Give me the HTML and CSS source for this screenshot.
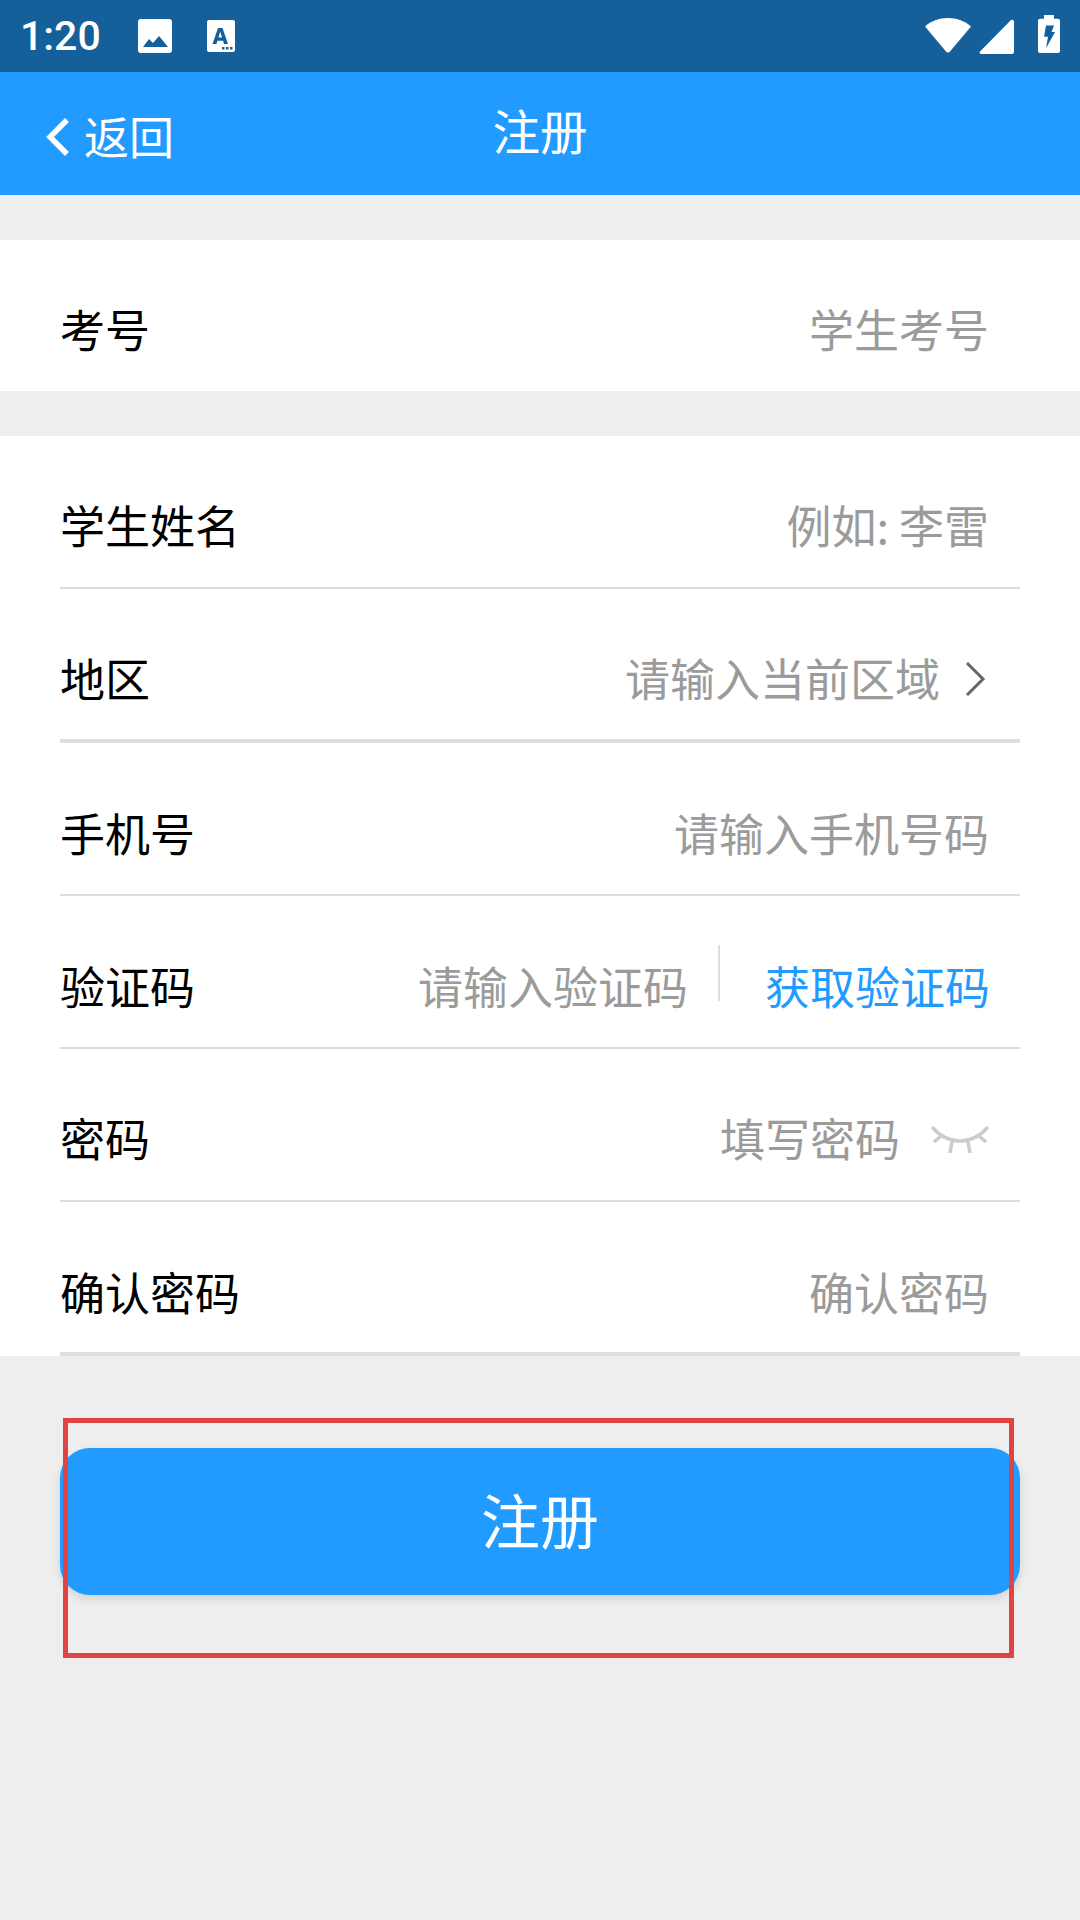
FILE: index.html

```html
<!DOCTYPE html>
<html lang="zh-CN">
<head>
  <meta charset="UTF-8" />
  <meta name="viewport" content="width=device-width, initial-scale=1.0"/>
  <title>注册</title>
  <link rel="stylesheet" href="styles.css">
</head>
<body>

<div class="status-bar">
  <span class="time">1:20</span>
  <svg class="st-image" width="34" height="34" viewBox="0 0 34 34">
    <rect width="34" height="34" rx="3" fill="#fff"/>
    <path d="M5 28l6-8 4 4 6-7 9 11z" fill="#155f9b"/>
  </svg>
  <svg class="st-font" width="28" height="32" viewBox="0 0 28 32">
    <rect width="28" height="32" rx="2" fill="#fff"/>
    <path d="M5.500 24L11 8h4.500L21 24h-4l-.9-3.200h-5.700L9.500 24zM11.500 17.500h3.500L13.200 11.500z" fill="#155f9b" fill-rule="evenodd"/>
    <path d="M15 27h2.500v2.500H15zM19 27h2.500v2.500H19zM23 27h2.500v2.500H23z" fill="#155f9b"/>
  </svg>
  <span class="spacer"></span>
  <svg class="st-wifi" width="46" height="36" viewBox="0 0 46 36">
    <path d="M0 9.500C6 4 14 1 23 1s17 3 23 8.500L25 34.500a2.600 2.600 0 0 1-4 0z" fill="#fff"/>
  </svg>
  <svg class="st-signal" width="35" height="35" viewBox="0 0 35 35">
    <path d="M32 1a2 2 0 0 1 3 1.500V33a2 2 0 0 1-2 2H2a1.500 1.500 0 0 1-1-2.500z" fill="#fff"/>
  </svg>
  <svg class="st-battery" width="22" height="38" viewBox="0 0 22 40" preserveAspectRatio="none">
    <path d="M6 0h10v4h4a2 2 0 0 1 2 2v32a2 2 0 0 1-2 2H2a2 2 0 0 1-2-2V6a2 2 0 0 1 2-2h4z" fill="#fff"/>
    <path d="M8 11h8l-2.500 7H17L8 35l2-12H6z" fill="#155f9b"/>
  </svg>
</div>

<div class="app-bar">
  <div class="back">
    <svg class="back-arrow" width="24" height="40" viewBox="0 0 24 40">
      <path d="M22 3L5 20l17 17" fill="none" stroke="#fff" stroke-width="5.500"/>
    </svg>
    <span>返回</span>
  </div>
  <div class="title">注册</div>
</div>

<div class="group group-first">
  <div class="row">
    <span class="label">考号</span>
    <span class="hint">学生考号</span>
  </div>
</div>

<div class="group">
  <div class="row line">
    <span class="label">学生姓名</span>
    <span class="hint">例如: 李雷</span>
  </div>
  <div class="row line-thick">
    <span class="label">地区</span>
    <span class="hint">请输入当前区域</span>
    <svg class="chevron" width="22" height="36" viewBox="0 0 22 36">
      <path d="M3 2l16 16L3 34" fill="none" stroke="#666" stroke-width="3"/>
    </svg>
  </div>
  <div class="row line low">
    <span class="label">手机号</span>
    <span class="hint">请输入手机号码</span>
  </div>
  <div class="row line low">
    <span class="label">验证码</span>
    <span class="hint">请输入验证码</span>
    <span class="code-split"></span>
    <span class="get-code">获取验证码</span>
  </div>
  <div class="row line">
    <span class="label">密码</span>
    <span class="hint">填写密码</span>
    <svg class="eye" width="60" height="30" viewBox="0 0 60 30">
      <path d="M2 2c8 9 17 14 28 14S50 11 58 2M4 17l7-6M56 17l-7-6M20 28l2-11M40 28l-2-11" fill="none" stroke="#cccccc" stroke-width="3.500"/>
    </svg>
  </div>
  <div class="row line-thick last">
    <span class="label">确认密码</span>
    <span class="hint">确认密码</span>
  </div>
</div>

<div class="submit">注册</div>

<div class="mark"></div>

</body>
</html>
```

FILE: styles.css

```css
* {
  box-sizing: border-box;
}
body {
  margin: 0;
  width: 1080px;
  height: 1920px;
  position: relative;
  overflow: hidden;
  background: #eeeeee;
  font-family: "Noto Sans CJK SC", "Noto Sans", sans-serif;
}
.status-bar {
  height: 72px;
  background: #155f9b;
  display: flex;
  align-items: center;
  padding: 0 20px;
  color: white;
}
.time {
  font-family: Roboto, sans-serif;
  font-size: 41px;
  font-weight: 500;
  width: 118px;
}
.st-font {
  margin-left: 35px;
}
.spacer {
  flex: 1;
}
.st-wifi {
  margin-top: -2px;
}
.st-signal {
  margin-left: 8px;
}
.st-battery {
  margin-left: 24px;
  margin-top: -4px;
}
.app-bar {
  height: 123px;
  background: #219bff;
  position: relative;
  display: flex;
  align-items: center;
  justify-content: center;
  color: white;
}
.back {
  position: absolute;
  left: 45px;
  top: 34px;
  display: flex;
  align-items: center;
  gap: 15px;
  font-size: 45px;
  line-height: 60px;
}
.back-arrow {
  margin-top: 2px;
}
.title {
  font-size: 47.500px;
  line-height: 60px;
  margin-top: -7px;
}
.group {
  background: white;
  margin-top: 45px;
}
.row {
  height: 153px;
  margin: 0 60px;
  padding: 26px 31px 0 0;
  display: flex;
  align-items: center;
  font-size: 45px;
}
.group-first .row {
  height: 151px;
}
.low {
  padding-top: 28px;
}
.line {
  border-bottom: 2px solid #dcdcdc;
}
.line-thick {
  border-bottom: 4px solid #dfdfdf;
  height: 154px;
}
.last {
  height: 154px;
  margin-bottom: -2px;
  padding-top: 28px;
}
.label {
  color: black;
  flex: 1;
}
.hint {
  color: #9b9b9b;
}
.chevron {
  margin-left: 24px;
  margin-right: 3px;
  margin-top: 3px;
}
.code-split {
  width: 2px;
  height: 56px;
  background: #dddddd;
  margin: -26px 45px 0 30px;
}
.get-code {
  color: #219bff;
  margin-right: -1px;
}
.eye {
  margin-left: 30px;
  margin-right: -1px;
  margin-top: 4px;
}
.submit {
  margin: 94px 60px 0;
  height: 147px;
  padding-bottom: 6px;
  background: #219bff;
  border-radius: 30px;
  box-shadow: 0 4px 8px rgba(0,0,0,0.12);
  color: white;
  font-size: 59px;
  display: flex;
  align-items: center;
  justify-content: center;
}
.mark {
  position: absolute;
  left: 63px;
  top: 1418px;
  width: 951px;
  height: 240px;
  border: 5px solid #e04343;
}
```
